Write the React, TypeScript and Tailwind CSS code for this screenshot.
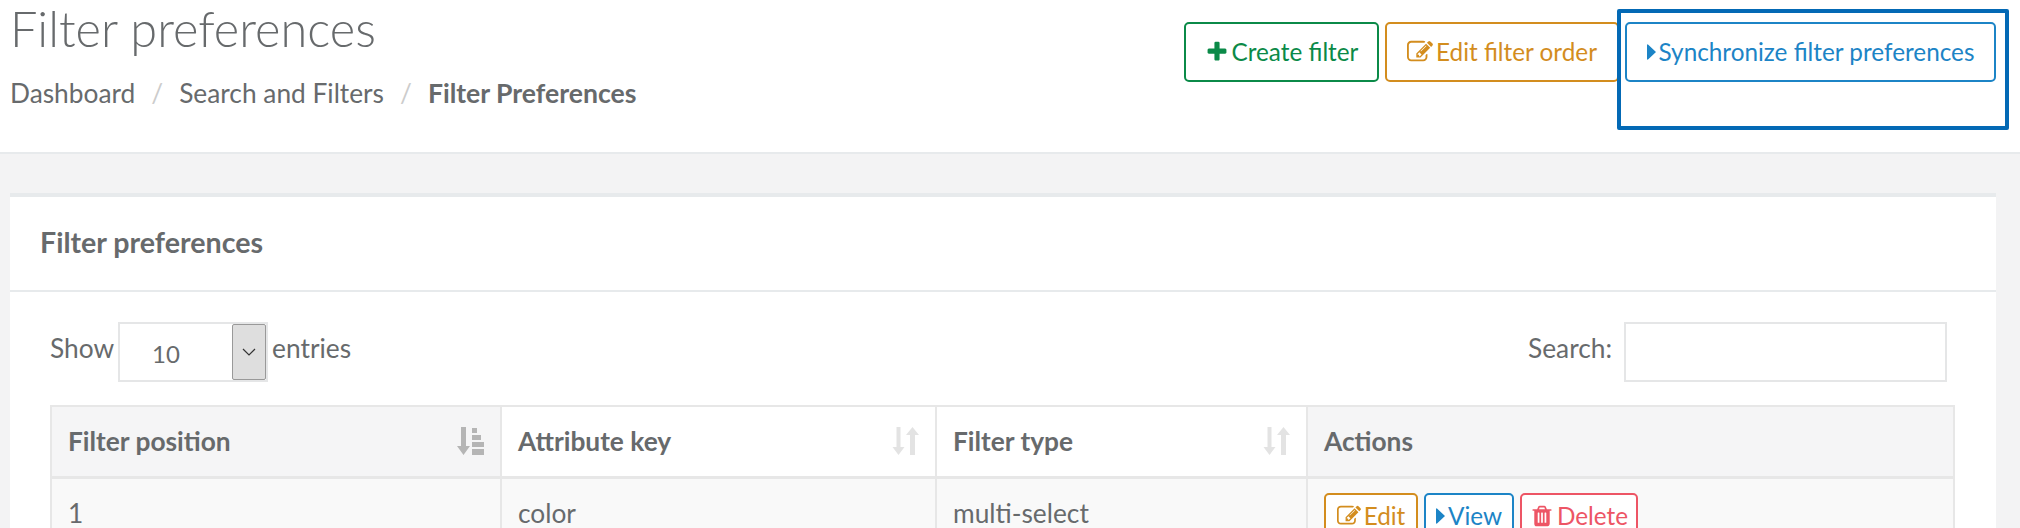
import React from 'react';

const SortOrder: React.FC = () => (
  <svg width="27" height="28" viewBox="0 0 27 28" className="text-[#b5b5b5]" fill="currentColor">
    <path d="M4 0h5v19h4l-6.500 9L0 19h4z" />
    <path d="M15 1h5v5h-5zM15 8h9v5h-9zM15 15h12v5H15zM15 22h12v6H15z" />
  </svg>
);

const SortBoth: React.FC = () => (
  <svg width="27" height="28" viewBox="0 0 27 28" className="text-[#e3e3e3]" fill="currentColor">
    <path d="M4.500 0h4v20h4l-6 8-6-8h4z" />
    <path d="M18 8h-4l6.500-8 6.500 8h-4v20h-5z" />
  </svg>
);

const PlusIcon: React.FC<{ size: number }> = ({ size }) => (
  <svg width={size} height={size} viewBox="0 0 1792 1792" fill="currentColor">
    <path d="M1600 736v192q0 40-28 68t-68 28h-416v416q0 40-28 68t-68 28h-192q-40 0-68-28t-28-68v-416h-416q-40 0-68-28t-28-68v-192q0-40 28-68t68-28h416v-416q0-40 28-68t68-28h192q40 0 68 28t28 68v416h416q40 0 68 28t28 68z" />
  </svg>
);

const EditIcon: React.FC<{ size: number }> = ({ size }) => (
  <svg width={size} height={size} viewBox="0 0 1792 1792" fill="currentColor">
    <path d="M888 1184l116-116-152-152-116 116v56h96v96h56zm440-720q-16-16-33 1l-350 350q-17 17-1 33t33-1l350-350q17-17 1-33zm80 594v190q0 119-84.500 203.500t-203.500 84.500h-832q-119 0-203.500-84.500t-84.500-203.500v-832q0-119 84.500-203.500t203.500-84.500h832q63 0 117 25 15 7 18 23 3 17-9 29l-49 49q-14 14-32 8-23-6-45-6h-832q-66 0-113 47t-47 113v832q0 66 47 113t113 47h832q66 0 113-47t47-113v-126q0-13 9-22l64-64q15-15 35-7t20 29zm-96-738l288 288-672 672h-288v-288zm444 132l-92 92-288-288 92-92q28-28 68-28t68 28l152 152q28 28 28 68t-28 68z" />
  </svg>
);

const TrashIcon: React.FC<{ size: number }> = ({ size }) => (
  <svg width={size} height={size} viewBox="0 0 1792 1792" fill="currentColor">
    <path d="M704 1376v-704q0-14-9-23t-23-9h-64q-14 0-23 9t-9 23v704q0 14 9 23t23 9h64q14 0 23-9t9-23zm256 0v-704q0-14-9-23t-23-9h-64q-14 0-23 9t-9 23v704q0 14 9 23t23 9h64q14 0 23-9t9-23zm256 0v-704q0-14-9-23t-23-9h-64q-14 0-23 9t-9 23v704q0 14 9 23t23 9h64q14 0 23-9t9-23zm-544-992h448l-48-117q-7-9-17-11h-317q-10 2-17 11zm928 32v64q0 14-9 23t-23 9h-96v948q0 83-47 143.500t-113 60.500h-832q-66 0-113-47t-47-141v-964h-96q-14 0-23-9t-9-23v-64q0-14 9-23t23-9h309l70-167q15-37 54-63t79-26h320q40 0 79 26t54 63l70 167h309q14 0 23 9t9 23z" />
  </svg>
);

const CaretIcon: React.FC = () => (
  <svg width="9" height="16" viewBox="0 0 9 16" fill="currentColor">
    <path d="M1 0.500l8 7.500-8 7.500a0.600 0.600 0 0 1-1-0.500V1a0.600 0.600 0 0 1 1-0.500z" />
  </svg>
);

const HeaderButton: React.FC<{ className: string; icon: React.ReactNode; label: string }> = ({ className, icon, label }) => (
  <button className={`h-[60px] flex items-center justify-center gap-[3px] bg-white border-2 rounded-[5px] text-[24.300px] ${className}`}>
    {icon}
    {label}
  </button>
);

const RowButton: React.FC<{ className: string; icon: React.ReactNode; label: string }> = ({ className, icon, label }) => (
  <button className={`h-[46px] flex items-center gap-[3px] bg-white border-2 rounded-[5px] text-[24.300px] leading-[24px] ${className}`}>
    {icon}
    {label}
  </button>
);

const App: React.FC = () => {
  return (
    <div className="h-[528px] overflow-hidden bg-[#f3f3f4] text-[#676a6c] text-[26.300px] font-['Lato',sans-serif] relative">
      <div className="h-[154px] bg-white border-b-2 border-[#e7eaec] flex justify-between">
        <div className="pl-[10px]">
          <h2 className="text-[48.700px] font-light leading-[50px] mt-[3px]">Filter preferences</h2>
          <div className="flex items-center mt-[24px] leading-[32px]">
            <span>Dashboard</span>
            <span className="text-[#cccccc] mx-[16px]">/</span>
            <span>Search and Filters</span>
            <span className="text-[#cccccc] mx-[16px]">/</span>
            <span className="font-bold text-[26.600px]">Filter Preferences</span>
          </div>
        </div>
        <div className="flex items-start gap-[6px] pt-[22px] pr-[24px]">
          <HeaderButton className="w-[195px] border-[#0b8a48] text-[#0b8a48]" icon={<PlusIcon size={24} />} label="Create filter" />
          <HeaderButton className="w-[234px] border-[#d38d1e] text-[#d38d1e]" icon={<EditIcon size={26} />} label="Edit filter order" />
          <HeaderButton className="w-[371px] border-[#1c84c6] text-[#1c84c6]" icon={<CaretIcon />} label="Synchronize filter preferences" />
        </div>
      </div>

      <div className="mt-[39px] mx-[10px] mr-[24px] bg-white border-t-4 border-[#e7eaec]">
        <div className="h-[95px] border-b-2 border-[#e7eaec] flex items-center pl-[30px] pb-[2px] font-bold text-[28.600px]">
          Filter preferences
        </div>
        <div className="pl-[40px] pr-[40px] pt-[30px]">
          <div className="flex justify-between h-[60px]">
            <div className="flex items-center gap-[4px]">
              <span className="pb-[6px]">Show</span>
              <div className="w-[150px] h-[60px] border-2 border-[#e5e6e7] flex items-center justify-between">
                <span className="pl-[32px] pt-[3px] text-[24px]">10</span>
                <div className="w-[34px] h-[56px] bg-[#dedede] border border-[#999999] rounded-[2px] flex items-center justify-center">
                  <svg width="14" height="8" viewBox="0 0 14 8" fill="none" stroke="#333333" strokeWidth="1.200">
                    <path d="M1 1l6 6 6-6" />
                  </svg>
                </div>
              </div>
              <span className="pb-[6px]">entries</span>
            </div>
            <div className="flex items-center gap-[12px] pr-[9px]">
              <span className="pb-[6px]">Search:</span>
              <div className="w-[323px] h-[60px] border-2 border-[#e5e6e7]" />
            </div>
          </div>

          <table className="w-[1905px] mt-[23px] table-fixed border-collapse">
            <thead>
              <tr className="h-[71px] font-bold text-left">
                <th className="w-[450px] bg-[#f5f5f6] border-2 border-b-[3px] border-[#e7e7e7] px-[16px]">
                  <div className="flex items-center justify-between">
                    <span>Filter position</span>
                    <SortOrder />
                  </div>
                </th>
                <th className="w-[435px] border-2 border-b-[3px] border-[#e7e7e7] px-[16px]">
                  <div className="flex items-center justify-between">
                    <span>Attribute key</span>
                    <SortBoth />
                  </div>
                </th>
                <th className="w-[371px] border-2 border-b-[3px] border-[#e7e7e7] px-[16px]">
                  <div className="flex items-center justify-between">
                    <span>Filter type</span>
                    <SortBoth />
                  </div>
                </th>
                <th className="bg-[#f5f5f6] border-2 border-b-[3px] border-[#e7e7e7] px-[16px]">Actions</th>
              </tr>
            </thead>
            <tbody>
              <tr className="bg-[#f9f9f9] h-[60px] leading-[30px]">
                <td className="border-2 border-[#e7e7e7] px-[16px] align-top pt-[19px]">1</td>
                <td className="border-2 border-[#e7e7e7] px-[16px] align-top pt-[19px]">color</td>
                <td className="border-2 border-[#e7e7e7] px-[16px] align-top pt-[19px]">multi-select</td>
                <td className="border-2 border-[#e7e7e7] px-[16px] align-top pt-[14px]">
                  <div className="flex gap-[6px]">
                    <RowButton className="w-[94px] justify-center border-[#d38d1e] text-[#d38d1e]" icon={<EditIcon size={24} />} label="Edit" />
                    <RowButton className="w-[90px] justify-center border-[#1c84c6] text-[#1c84c6]" icon={<CaretIcon />} label="View" />
                    <RowButton className="w-[118px] justify-center border-[#ed5565] text-[#ed5565]" icon={<TrashIcon size={24} />} label="Delete" />
                  </div>
                </td>
              </tr>
            </tbody>
          </table>
        </div>
      </div>

      <div className="absolute left-[1617px] top-[9px] w-[392px] h-[121px] border-4 border-[#0369b5] rounded-[2px]" />
    </div>
  );
};

export default App;
